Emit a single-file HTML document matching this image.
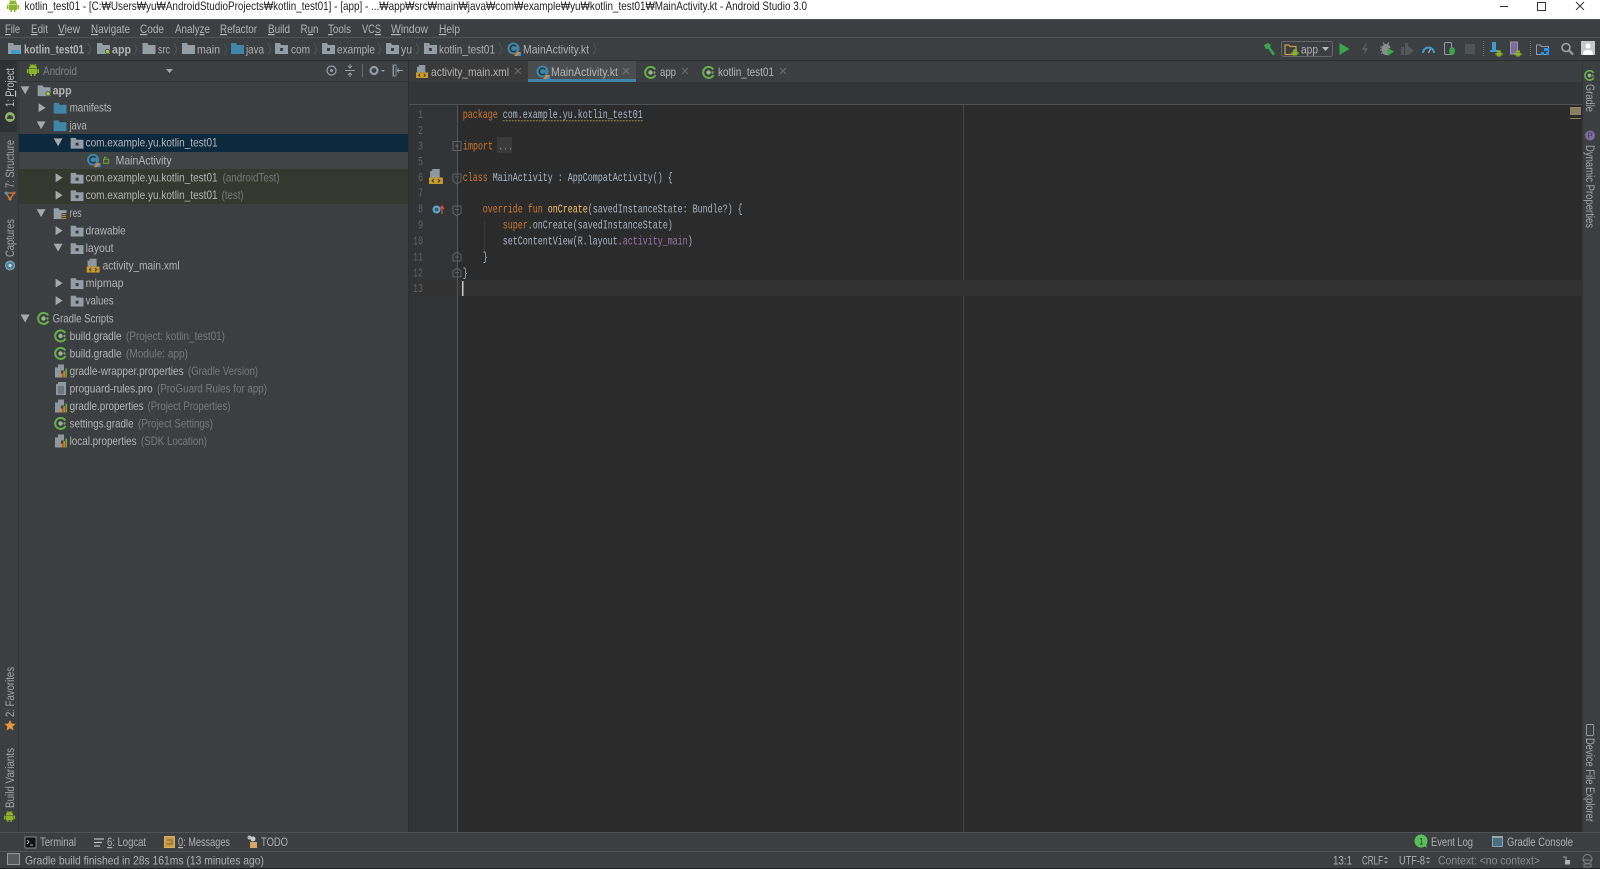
<!DOCTYPE html>
<html lang="en"><head><meta charset="utf-8"><title>kotlin_test01 - Android Studio 3.0</title>
<style>
html,body{margin:0;padding:0;background:#3c3f41;width:1600px;height:869px;overflow:hidden}
svg{display:block;filter:blur(.35px)}
text{font-family:"Liberation Sans","Noto Sans CJK KR",sans-serif;font-size:12px;fill:#b4b4b4;white-space:pre}
.d{fill:#77797b}
.m{fill:#b0b0b0}
.b{font-weight:bold}
.c{font-family:"Liberation Mono","DejaVu Sans Mono",monospace;fill:#a9b7c6}
.n{font-family:"Liberation Mono","DejaVu Sans Mono",monospace;fill:#606366}
.k{fill:#cc7832}.p{fill:#9876aa}.f{fill:#ffc66d}
.u{text-decoration:underline}
.v{font-size:11.5px;fill:#a4a6a8}
.ch{fill:none;stroke:#505355;stroke-width:1}
</style></head>
<body>
<svg xmlns="http://www.w3.org/2000/svg" width="1600" height="869" viewBox="0 0 1600 869">
<defs>
<symbol id="fg" viewBox="0 0 13 11"><path d="M0 0h5l1 2h7v9H0z" fill="#929da5"/></symbol>
<symbol id="fp" viewBox="0 0 13 11"><path d="M0 0h5l1 2h7v9H0z" fill="#929da5"/><rect x="5" y="5" width="3" height="3" fill="#3c3f41"/></symbol>
<symbol id="fb" viewBox="0 0 13 11"><path d="M0 0h5l1 2h7v9H0z" fill="#3f86a8"/></symbol>
<symbol id="fa" viewBox="0 0 13 11"><path d="M0 0h5l1 2h7v9H0z" fill="#929da5"/><circle cx="10.500" cy="8.500" r="2.500" fill="#3c3f41"/><circle cx="10.500" cy="8.500" r="1.800" fill="#a4c639"/></symbol>
<symbol id="fr" viewBox="0 0 13 11"><path d="M0 0h5l1 2h7v9H0z" fill="#929da5"/><path d="M8 5h5v6H8z" fill="#3c3f41"/><path d="M8.500 6h4v1h-4zM8.500 8h4v1h-4zM8.500 10h4v1h-4z" fill="#c9952c"/></symbol>
<symbol id="cl" viewBox="0 0 14 14"><circle cx="6.500" cy="6.500" r="6" fill="#3f86a8"/><path d="M9 4.500A3.200 3.200 0 1 0 9 8.500" fill="none" stroke="#26343c" stroke-width="1.500"/><path d="M7 14l3.500-4H14L10 14z" fill="#f58220"/><path d="M10 14l4-4v4z" fill="#2196f3"/></symbol>
<symbol id="gr" viewBox="0 0 13 13"><path d="M11.300 3.500A5.500 5.500 0 1 0 11.500 9" fill="none" stroke="#66b04a" stroke-width="2"/><circle cx="6.500" cy="6.500" r="2.200" fill="#9db48f"/><circle cx="10.500" cy="6.500" r="1.200" fill="#66b04a"/></symbol>
<symbol id="xm" viewBox="0 0 14 14"><path d="M3 0h7v8H1V2z" fill="#8e989f"/><path d="M3 0v2H1z" fill="#3c3f41"/><rect x="0" y="8" width="13" height="6" fill="#c79a2d"/><path d="M4.500 9.500L3 11l1.500 1.500M8.500 9.500L10 11l-1.500 1.500" fill="none" stroke="#3c3320" stroke-width="1"/></symbol>
<symbol id="pr" viewBox="0 0 12 13"><path d="M3 0h6v6H6v7H0V3z" fill="#8e989f"/><path d="M3 0v3H0z" fill="#3c3f41"/><rect x="6" y="9" width="1.600" height="4" fill="#e0822a"/><rect x="8.300" y="6.500" width="1.600" height="6.500" fill="#e0822a"/><rect x="10.400" y="4" width="1.600" height="9" fill="#6fa83c"/></symbol>
<symbol id="tx" viewBox="0 0 12 13"><path d="M3 0h8v13H1V2z" fill="#8e989f"/><path d="M3 0v2H1z" fill="#3c3f41"/><path d="M3 5h6M3 7h6M3 9h6M3 11h6" stroke="#3c3f41" stroke-width=".8"/></symbol>
<symbol id="rt" viewBox="0 0 8 9"><path d="M1 0l7 4.500L1 9z" fill="#a6a8aa"/></symbol>
<symbol id="dn" viewBox="0 0 9 8"><path d="M0 0h9L4.500 8z" fill="#a6a8aa"/></symbol>
<symbol id="an" viewBox="0 0 12 12"><path d="M2 4.500a4 4 0 0 1 8 0z" fill="#8ab528"/><rect x="2" y="5" width="8" height="5" fill="#8ab528"/><rect x="0" y="5" width="1.500" height="4" fill="#8ab528"/><rect x="10.500" y="5" width="1.500" height="4" fill="#8ab528"/><rect x="3.500" y="10" width="1.500" height="2" fill="#8ab528"/><rect x="7" y="10" width="1.500" height="2" fill="#8ab528"/><path d="M3 0l1.500 2M9 0L7.500 2" stroke="#8ab528" stroke-width=".7"/></symbol>
</defs>

<!-- base -->
<rect width="1600" height="869" fill="#3c3f41"/>
<!-- title bar -->
<rect width="1600" height="19" fill="#fff"/>
<rect y="19" width="1600" height="1" fill="#505355"/>
<use href="#an" x="7" y="0" width="12" height="12"/>
<text x="24.500" y="10" textLength="782.500" lengthAdjust="spacingAndGlyphs" style="fill:#222">kotlin_test01 - [C:₩Users₩yu₩AndroidStudioProjects₩kotlin_test01] - [app] - ...₩app₩src₩main₩java₩com₩example₩yu₩kotlin_test01₩MainActivity.kt - Android Studio 3.0</text>
<path d="M1500 6.500h8" stroke="#333" stroke-width="1"/>
<rect x="1537.500" y="2.500" width="8" height="8" fill="none" stroke="#333"/>
<path d="M1576 2l8 8M1584 2l-8 8" stroke="#333" stroke-width="1"/>

<!-- menu -->
<g>
<text x="5" y="33" textLength="15" lengthAdjust="spacingAndGlyphs"><tspan class="u">F</tspan>ile</text>
<text x="31" y="33" textLength="17" lengthAdjust="spacingAndGlyphs"><tspan class="u">E</tspan>dit</text>
<text x="58" y="33" textLength="22" lengthAdjust="spacingAndGlyphs"><tspan class="u">V</tspan>iew</text>
<text x="91" y="33" textLength="39" lengthAdjust="spacingAndGlyphs"><tspan class="u">N</tspan>avigate</text>
<text x="140" y="33" textLength="24" lengthAdjust="spacingAndGlyphs"><tspan class="u">C</tspan>ode</text>
<text x="175" y="33" textLength="35" lengthAdjust="spacingAndGlyphs">Analy<tspan class="u">z</tspan>e</text>
<text x="220" y="33" textLength="37" lengthAdjust="spacingAndGlyphs"><tspan class="u">R</tspan>efactor</text>
<text x="268" y="33" textLength="22" lengthAdjust="spacingAndGlyphs"><tspan class="u">B</tspan>uild</text>
<text x="300.500" y="33" textLength="18" lengthAdjust="spacingAndGlyphs">R<tspan class="u">u</tspan>n</text>
<text x="328" y="33" textLength="23" lengthAdjust="spacingAndGlyphs"><tspan class="u">T</tspan>ools</text>
<text x="362" y="33" textLength="19" lengthAdjust="spacingAndGlyphs">VC<tspan class="u">S</tspan></text>
<text x="391" y="33" textLength="37" lengthAdjust="spacingAndGlyphs"><tspan class="u">W</tspan>indow</text>
<text x="439" y="33" textLength="21" lengthAdjust="spacingAndGlyphs"><tspan class="u">H</tspan>elp</text>
</g>
<rect y="37" width="1600" height="1" fill="#505355"/>

<!-- nav bar -->
<use href="#fg" x="8" y="43" width="13" height="11"/><rect x="11" y="50" width="9" height="4" fill="#3f9bd0"/>
<text class="b" x="24" y="53.500" textLength="60" lengthAdjust="spacingAndGlyphs">kotlin_test01</text>
<path class="ch" d="M88 43l3 6-3 6"/>
<use href="#fa" x="97" y="43" width="13" height="11"/>
<text class="b" x="112" y="53.500" textLength="19" lengthAdjust="spacingAndGlyphs">app</text>
<path class="ch" d="M134 43l3 6-3 6"/>
<use href="#fg" x="142.500" y="43" width="13" height="11"/>
<text x="158" y="53.500" textLength="12" lengthAdjust="spacingAndGlyphs" class="m">src</text>
<path class="ch" d="M174 43l3 6-3 6"/>
<use href="#fg" x="182" y="43" width="13" height="11"/>
<text x="197" y="53.500" textLength="23" lengthAdjust="spacingAndGlyphs" class="m">main</text>
<path class="ch" d="M224 43l3 6-3 6"/>
<use href="#fb" x="231" y="43" width="13" height="11"/>
<text x="246" y="53.500" textLength="18" lengthAdjust="spacingAndGlyphs" class="m">java</text>
<path class="ch" d="M268 43l3 6-3 6"/>
<use href="#fp" x="275" y="43" width="13" height="11"/>
<text x="291" y="53.500" textLength="19" lengthAdjust="spacingAndGlyphs" class="m">com</text>
<path class="ch" d="M314 43l3 6-3 6"/>
<use href="#fp" x="322" y="43" width="13" height="11"/>
<text x="337" y="53.500" textLength="38" lengthAdjust="spacingAndGlyphs" class="m">example</text>
<path class="ch" d="M378 43l3 6-3 6"/>
<use href="#fp" x="386" y="43" width="13" height="11"/>
<text x="401" y="53.500" textLength="11" lengthAdjust="spacingAndGlyphs" class="m">yu</text>
<path class="ch" d="M416 43l3 6-3 6"/>
<use href="#fp" x="424" y="43" width="13" height="11"/>
<text x="439" y="53.500" textLength="56" lengthAdjust="spacingAndGlyphs" class="m">kotlin_test01</text>
<path class="ch" d="M499 43l3 6-3 6"/>
<use href="#cl" x="507" y="42" width="14" height="14"/>
<text x="523" y="53.500" textLength="66" lengthAdjust="spacingAndGlyphs" class="m">MainActivity.kt</text>
<path class="ch" d="M593 43l3 6-3 6"/>

<!-- toolbar right -->
<path d="M1264 45l4-2 3 2-1 2 5 7-2 1.500-5-7-2 1z" fill="#3aa64c"/>
<rect x="1281.500" y="41.500" width="51" height="15" rx="2" fill="none" stroke="#646769"/>
<path d="M1285 45h4l1 1.500h6v8h-11z" fill="none" stroke="#c79a4c" stroke-width="1.200"/>
<use href="#an" x="1291" y="49" width="8" height="7"/>
<text x="1301" y="53.500" textLength="17" lengthAdjust="spacingAndGlyphs">app</text>
<path d="M1322 47h7l-3.500 4z" fill="#bbb"/>
<path d="M1339.500 43v12l10-6z" fill="#3aa64c"/>
<path d="M1366 43l-4 7h3l-1 5 4-7h-3l2-5z" fill="#5a5d5f"/>
<path d="M1383 42.500l1.500 2M1389 42.500l-1.500 2M1380 47h2M1380 50h2M1381 53.500l2-1" stroke="#8a8d8f" stroke-width="1.100"/>
<path d="M1386 44a4.500 5.500 0 0 0-4.500 5.500 4.500 5.500 0 0 0 4.500 5.500h2v-11z" fill="#8a8d8f"/><path d="M1388 44.500a4 4 0 0 1 2.500 3.500h-2.500z" fill="#8a8d8f"/><path d="M1387.500 47.500v8.500l6.500-4.200z" fill="#3aa64c"/>
<rect x="1401" y="47" width="3" height="8" fill="#55585a"/><rect x="1405" y="43" width="3" height="12" fill="#55585a"/><path d="M1408 46v9l6-4.500z" fill="#55585a"/>
<path d="M1423 53a5.500 5.500 0 0 1 11 0" fill="none" stroke="#3f9bd0" stroke-width="2"/><path d="M1428.500 53l2-4" stroke="#a6a8aa" stroke-width="1.300"/>
<rect x="1444.500" y="42.500" width="7" height="12" rx="1" fill="none" stroke="#929da5"/><path d="M1452 47a3 4 0 1 0 .1 0z" fill="#3aa64c"/>
<rect x="1465" y="44" width="10" height="10" fill="#505355"/>
<path d="M1483.500 41v15" stroke="#707375" stroke-dasharray="1 1"/>
<rect x="1492" y="42" width="4" height="9" fill="#3f9bd0"/><rect x="1490" y="50" width="8" height="2" fill="#3f9bd0"/><use href="#an" x="1495" y="50" width="8" height="7"/>
<rect x="1510.500" y="42" width="7" height="12" fill="#7d6a9e" stroke="#929da5"/><use href="#an" x="1514" y="50" width="8" height="7"/>
<path d="M1530.500 41v15" stroke="#707375" stroke-dasharray="1 1"/>
<path d="M1536.500 45h4l1 1.500h7v8h-12z" fill="none" stroke="#929da5"/><rect x="1544" y="48" width="5" height="3" fill="#2196f3"/><rect x="1541" y="52" width="3" height="3" fill="#2196f3"/><rect x="1546" y="52" width="3" height="3" fill="#2196f3"/>
<circle cx="1566" cy="47.500" r="4" fill="none" stroke="#a0a3a5" stroke-width="1.600"/><path d="M1569 50.500l4 4" stroke="#a0a3a5" stroke-width="2"/>
<rect x="1581" y="41" width="14" height="14" fill="#c8c8c8"/><circle cx="1588" cy="46" r="2.500" fill="#fff"/><path d="M1583 55c0-4 2-5 5-5s5 1 5 5z" fill="#fff"/>

<rect y="60" width="1600" height="1" fill="#2c2e30"/>

<!-- left tool bar -->
<rect x="0" y="61" width="17" height="71" fill="#2f3234"/>
<rect x="18" y="61" width="1" height="771" fill="#323436"/>
<text class="v" transform="translate(14 107) rotate(-90)" textLength="39" lengthAdjust="spacingAndGlyphs" style="fill:#c4c4c4">1: <tspan class="u">P</tspan>roject</text>
<circle cx="10" cy="117" r="5" fill="#8fb36a"/><path d="M7 118a3 3 0 0 1 6 0v1H7z" fill="#3c3f41"/>
<text class="v" transform="translate(14 188) rotate(-90)" textLength="48" lengthAdjust="spacingAndGlyphs">7: Structure</text>
<path d="M6 193h8M6 193l4 6M14 193l-4 6" stroke="#d0803a" stroke-width="1.300" fill="none"/><circle cx="6" cy="193" r="1.500" fill="#3f9bd0"/><circle cx="14" cy="193" r="1.500" fill="#d0603a"/><circle cx="10" cy="199" r="1.500" fill="#d0803a"/>
<text class="v" transform="translate(14 257) rotate(-90)" textLength="38" lengthAdjust="spacingAndGlyphs">Captures</text>
<circle cx="10" cy="265.500" r="4.500" fill="#3f86a8" stroke="#a0a3a5"/><circle cx="10" cy="265.500" r="1.500" fill="#ddd"/>
<text class="v" transform="translate(14 717) rotate(-90)" textLength="50" lengthAdjust="spacingAndGlyphs">2: Favorites</text>
<path d="M10 720l1.600 3.500 3.900.4-2.900 2.600.8 3.900-3.400-2-3.400 2 .8-3.900-2.900-2.600 3.900-.4z" fill="#e8983a"/>
<text class="v" transform="translate(14 808) rotate(-90)" textLength="60" lengthAdjust="spacingAndGlyphs">Build Variants</text>
<use href="#an" x="4" y="811" width="11" height="11"/>

<!-- project header -->
<use href="#an" x="27" y="64" width="12" height="12"/>
<text x="43" y="75" textLength="34" lengthAdjust="spacingAndGlyphs" style="fill:#7f8284">Android</text>
<path d="M166 69h7l-3.500 4z" fill="#a6a8aa"/>
<circle cx="331.500" cy="70.500" r="4.500" fill="none" stroke="#929da5" stroke-width="1.300"/><circle cx="331.500" cy="70.500" r="1.500" fill="#929da5"/>
<path d="M345 70.500h10M350 64v4M350 73v4M348 66l2 2 2-2M348 75l2-2 2 2" stroke="#929da5" fill="none"/>
<path d="M362.500 64v13" stroke="#6a6d6f"/>
<circle cx="374" cy="70.500" r="3.500" fill="none" stroke="#929da5" stroke-width="2.200"/><path d="M381 70h4l-2 2z" fill="#929da5"/>
<path d="M393.500 65v11M397 70.500h6M397 70.500l2-2M397 70.500l2 2" stroke="#929da5" fill="none"/><rect x="393" y="65" width="3" height="11" fill="none" stroke="#929da5" stroke-width=".8"/>
<rect x="19" y="81" width="390" height="1" fill="#323436"/>

<!-- tree -->
<rect x="19" y="134" width="389" height="18" fill="#0d293e"/>
<rect x="19" y="152" width="389" height="17" fill="#414345"/>
<rect x="19" y="169" width="389" height="35" fill="#33392e"/>

<g transform="translate(-.4 -.8)">
<use href="#dn" x="21" y="87" width="9" height="8"/><use href="#fa" x="38" y="86" width="13" height="11"/>
<text class="b" x="53" y="95.500" textLength="19" lengthAdjust="spacingAndGlyphs">app</text>
<use href="#rt" x="38" y="104" width="8" height="9"/><use href="#fb" x="54" y="103.500" width="13" height="11"/>
<text x="70" y="112.500" textLength="42" lengthAdjust="spacingAndGlyphs">manifests</text>
<use href="#dn" x="37" y="122" width="9" height="8"/><use href="#fb" x="54" y="121" width="13" height="11"/>
<text x="70" y="130.500" textLength="17" lengthAdjust="spacingAndGlyphs">java</text>
<use href="#dn" x="54" y="139" width="9" height="8"/><use href="#fp" x="71" y="138.500" width="13" height="11"/>
<text x="86" y="147.500" textLength="132" lengthAdjust="spacingAndGlyphs">com.example.yu.kotlin_test01</text>
<use href="#cl" x="87" y="154" width="14" height="14"/><path d="M104 160h5v4h-5zM105 160v-2h2" fill="none" stroke="#6fa83c"/>
<text x="116" y="165.500" textLength="56" lengthAdjust="spacingAndGlyphs">MainActivity</text>
<use href="#rt" x="55" y="174" width="8" height="9"/><use href="#fp" x="71" y="173.500" width="13" height="11"/>
<text x="86" y="182.500" textLength="132" lengthAdjust="spacingAndGlyphs">com.example.yu.kotlin_test01</text>
<text class="d" x="223" y="182.500" textLength="57" lengthAdjust="spacingAndGlyphs">(androidTest)</text>
<use href="#rt" x="55" y="191.500" width="8" height="9"/><use href="#fp" x="71" y="191" width="13" height="11"/>
<text x="86" y="200" textLength="132" lengthAdjust="spacingAndGlyphs">com.example.yu.kotlin_test01</text>
<text class="d" x="222" y="200" textLength="22" lengthAdjust="spacingAndGlyphs">(test)</text>
</g>
<g transform="translate(-.4 -.4)">
<use href="#dn" x="37" y="209.500" width="9" height="8"/><use href="#fr" x="54" y="208.500" width="13" height="11"/>
<text x="70" y="217.500" textLength="12" lengthAdjust="spacingAndGlyphs">res</text>
<use href="#rt" x="55" y="226.500" width="8" height="9"/><use href="#fp" x="71" y="226" width="13" height="11"/>
<text x="86" y="235" textLength="40" lengthAdjust="spacingAndGlyphs">drawable</text>
<use href="#dn" x="54" y="244" width="9" height="8"/><use href="#fp" x="71" y="243.500" width="13" height="11"/>
<text x="86" y="252.500" textLength="28" lengthAdjust="spacingAndGlyphs">layout</text>
<use href="#xm" x="87" y="259" width="14" height="14"/>
<text x="103" y="270" textLength="77" lengthAdjust="spacingAndGlyphs">activity_main.xml</text>
<use href="#rt" x="55" y="279" width="8" height="9"/><use href="#fp" x="71" y="278.500" width="13" height="11"/>
<text x="86" y="287.500" textLength="38" lengthAdjust="spacingAndGlyphs">mipmap</text>
<use href="#rt" x="55" y="296.500" width="8" height="9"/><use href="#fp" x="71" y="296" width="13" height="11"/>
<text x="86" y="305" textLength="28" lengthAdjust="spacingAndGlyphs">values</text>
</g>
<use href="#dn" x="20.600" y="314.500" width="9" height="8"/><use href="#gr" x="37" y="312" width="13" height="13"/>
<text x="52.600" y="322.500" textLength="61" lengthAdjust="spacingAndGlyphs">Gradle Scripts</text>
<use href="#gr" x="54" y="329.500" width="13" height="13"/>
<text x="69.600" y="340" textLength="52" lengthAdjust="spacingAndGlyphs">build.gradle</text>
<text class="d" x="126" y="340" textLength="99" lengthAdjust="spacingAndGlyphs">(Project: kotlin_test01)</text>
<use href="#gr" x="54" y="347" width="13" height="13"/>
<text x="69.600" y="357.500" textLength="52" lengthAdjust="spacingAndGlyphs">build.gradle</text>
<text class="d" x="126" y="357.500" textLength="62" lengthAdjust="spacingAndGlyphs">(Module: app)</text>
<use href="#pr" x="55" y="364.500" width="12" height="13"/>
<text x="69.600" y="375" textLength="114" lengthAdjust="spacingAndGlyphs">gradle-wrapper.properties</text>
<text class="d" x="188" y="375" textLength="70" lengthAdjust="spacingAndGlyphs">(Gradle Version)</text>
<use href="#tx" x="55" y="382" width="12" height="13"/>
<text x="69.600" y="392.500" textLength="83" lengthAdjust="spacingAndGlyphs">proguard-rules.pro</text>
<text class="d" x="157" y="392.500" textLength="110" lengthAdjust="spacingAndGlyphs">(ProGuard Rules for app)</text>
<use href="#pr" x="55" y="399.500" width="12" height="13"/>
<text x="69.600" y="410" textLength="74" lengthAdjust="spacingAndGlyphs">gradle.properties</text>
<text class="d" x="147.500" y="410" textLength="83" lengthAdjust="spacingAndGlyphs">(Project Properties)</text>
<use href="#gr" x="54" y="417" width="13" height="13"/>
<text x="69.600" y="427.500" textLength="64" lengthAdjust="spacingAndGlyphs">settings.gradle</text>
<text class="d" x="138" y="427.500" textLength="75" lengthAdjust="spacingAndGlyphs">(Project Settings)</text>
<use href="#pr" x="55" y="434.500" width="12" height="13"/>
<text x="69.600" y="445" textLength="67" lengthAdjust="spacingAndGlyphs">local.properties</text>
<text class="d" x="141" y="445" textLength="66" lengthAdjust="spacingAndGlyphs">(SDK Location)</text>

<!-- splitter -->
<rect x="408" y="61" width="1" height="771" fill="#2c2e30"/>

<!-- tabs -->
<rect x="409" y="61" width="1173" height="21" fill="#3c3f41"/>
<rect x="409" y="61" width="119" height="21" fill="#3a3a3a"/>
<rect x="528" y="61" width="108" height="18" fill="#4a4d4f"/>
<rect x="528" y="79" width="108" height="3" fill="#4083a9"/>
<use href="#xm" x="416" y="65" width="13" height="13"/>
<text x="431" y="76" textLength="78" lengthAdjust="spacingAndGlyphs">activity_main.xml</text>
<path d="M515 68l6 6M521 68l-6 6" stroke="#6b6e70"/>
<use href="#cl" x="536" y="65" width="14" height="14"/>
<text x="551" y="76" textLength="67" lengthAdjust="spacingAndGlyphs">MainActivity.kt</text>
<path d="M623 68l6 6M629 68l-6 6" stroke="#75787a"/>
<use href="#gr" x="644" y="66" width="13" height="13"/>
<text x="660" y="76" textLength="16" lengthAdjust="spacingAndGlyphs">app</text>
<path d="M682 68l6 6M688 68l-6 6" stroke="#6b6e70"/>
<use href="#gr" x="702" y="66" width="13" height="13"/>
<text x="718" y="76" textLength="56" lengthAdjust="spacingAndGlyphs">kotlin_test01</text>
<path d="M780 68l6 6M786 68l-6 6" stroke="#6b6e70"/>

<!-- breadcrumb band -->
<rect x="409" y="82" width="1173" height="22" fill="#333537"/>
<rect x="409" y="104" width="1173" height="1" fill="#505355"/>

<!-- editor -->
<rect x="409" y="105" width="1173" height="727" fill="#2b2b2b"/>
<rect x="409" y="105" width="48" height="727" fill="#313335"/>
<rect x="457" y="105" width="1" height="727" fill="#555555"/>
<rect x="963" y="105" width="1" height="727" fill="#444444"/>
<rect x="458" y="280" width="1124" height="16" fill="#323232"/>
<rect x="409" y="280" width="48" height="16" fill="#323232"/>
<rect x="484" y="221" width="1" height="32" fill="#3b3b3b"/>
<rect x="1570" y="107" width="11" height="8" fill="#8a7f63"/>
<rect x="1570" y="118" width="11" height="1" fill="#8a7f63"/>

<!-- line numbers -->
<g text-anchor="end">
<text class="n" x="423" y="118" textLength="5" lengthAdjust="spacingAndGlyphs">1</text>
<text class="n" x="423" y="134" textLength="5" lengthAdjust="spacingAndGlyphs">2</text>
<text class="n" x="423" y="149.500" textLength="5" lengthAdjust="spacingAndGlyphs">3</text>
<text class="n" x="423" y="165" textLength="5" lengthAdjust="spacingAndGlyphs">5</text>
<text class="n" x="423" y="181" textLength="5" lengthAdjust="spacingAndGlyphs">6</text>
<text class="n" x="423" y="196.500" textLength="5" lengthAdjust="spacingAndGlyphs">7</text>
<text class="n" x="423" y="212.500" textLength="5" lengthAdjust="spacingAndGlyphs">8</text>
<text class="n" x="423" y="228.500" textLength="5" lengthAdjust="spacingAndGlyphs">9</text>
<text class="n" x="423" y="244.500" textLength="10" lengthAdjust="spacingAndGlyphs">10</text>
<text class="n" x="423" y="260.500" textLength="10" lengthAdjust="spacingAndGlyphs">11</text>
<text class="n" x="423" y="276.500" textLength="10" lengthAdjust="spacingAndGlyphs">12</text>
<text class="n" x="423" y="292" textLength="10" lengthAdjust="spacingAndGlyphs">13</text>
</g>

<!-- gutter icons & folding -->
<use href="#xm" x="429" y="168" width="15" height="17"/>
<circle cx="436.500" cy="209.500" r="4" fill="#5aa5c8"/><circle cx="436.500" cy="209.500" r="1.700" fill="#2f5a70"/>
<path d="M442 214v-7M440 209l2-3 2 3" stroke="#d0503c" fill="none" stroke-width="1.300"/>
<g fill="none" stroke="#5f6264">
<rect x="453" y="141.500" width="8" height="9"/><path d="M455 146h4M457 144v4" />
<path d="M453 174h8v7l-4 3-4-3z"/><path d="M455 177h4"/>
<path d="M453 206h8v7l-4 3-4-3z"/><path d="M455 209.500h4"/>
<path d="M453 261h8v-6l-4-3-4 3z"/><path d="M455 257h4"/>
<path d="M453 277h8v-6l-4-3-4 3z"/><path d="M455 272.500h4"/>
</g>

<!-- code -->
<text class="c" x="462.700" y="118" textLength="180" lengthAdjust="spacingAndGlyphs"><tspan class="k">package</tspan> com.example.yu.kotlin_test01</text>
<path d="M502.700 120.800H643" stroke="#8f8b4f" stroke-width="1" stroke-dasharray="2 1"/>
<text class="c k" x="463" y="149.500" textLength="30" lengthAdjust="spacingAndGlyphs" style="fill:#cc7832">import</text>
<rect x="497" y="137" width="15" height="16" fill="#3a3a3a"/>
<text class="c" x="498" y="149.500" textLength="15" lengthAdjust="spacingAndGlyphs" style="fill:#808080">...</text>
<text class="c" x="462.700" y="181" textLength="210" lengthAdjust="spacingAndGlyphs"><tspan class="k">class</tspan> MainActivity : AppCompatActivity() {</text>
<text class="c" x="482.700" y="212.500" textLength="260" lengthAdjust="spacingAndGlyphs"><tspan class="k">override fun</tspan> <tspan class="f">onCreate</tspan>(savedInstanceState: Bundle?) {</text>
<text class="c" x="502.700" y="228.500" textLength="170" lengthAdjust="spacingAndGlyphs"><tspan class="k">super</tspan>.onCreate(savedInstanceState)</text>
<text class="c" x="502.700" y="244.500" textLength="190" lengthAdjust="spacingAndGlyphs">setContentView(R.layout.<tspan class="p">activity_main</tspan>)</text>
<text class="c" x="482.700" y="260.500" textLength="5" lengthAdjust="spacingAndGlyphs">}</text>
<text class="c" x="462.700" y="276.500" textLength="5" lengthAdjust="spacingAndGlyphs">}</text>
<rect x="462" y="281" width="1.500" height="15" fill="#c8c8c8"/>

<!-- right tool bar -->
<rect x="1582" y="61" width="1" height="771" fill="#323436"/>
<use href="#gr" x="1584" y="70" width="11" height="11"/>
<text class="v" transform="translate(1586 84) rotate(90)" textLength="28" lengthAdjust="spacingAndGlyphs">Gradle</text>
<circle cx="1590" cy="135.500" r="5" fill="#7d6a9e"/><text x="1587.500" y="138.500" textLength="5" lengthAdjust="spacingAndGlyphs" style="font-size:8px;fill:#3c3f41">P</text>
<text class="v" transform="translate(1586 145) rotate(90)" textLength="83" lengthAdjust="spacingAndGlyphs">Dynamic Properties</text>
<rect x="1586.500" y="724.500" width="7" height="11" rx="1" fill="none" stroke="#8e989f"/>
<text class="v" transform="translate(1586 738) rotate(90)" textLength="84" lengthAdjust="spacingAndGlyphs">Device File Explorer</text>

<!-- bottom tool bar -->
<rect y="832" width="1600" height="1" fill="#505355"/>
<rect x="25" y="837" width="11" height="11" fill="#111" stroke="#9a9d9f" stroke-width=".8"/><path d="M27 840l2 2-2 2M30 845h3" stroke="#ddd" fill="none" stroke-width=".8"/>
<text class="m" x="40" y="846" textLength="36" lengthAdjust="spacingAndGlyphs">Terminal</text>
<path d="M94 839h10M94 842.500h8M94 846h6" stroke="#bbb" stroke-width="1.300"/>
<text class="m" x="107" y="846" textLength="39" lengthAdjust="spacingAndGlyphs"><tspan class="u">6</tspan>: Logcat</text>
<rect x="164.500" y="836.500" width="10" height="11" fill="#c79a4c" stroke="#d8ae60"/><path d="M167 840h5v4h-5" fill="none" stroke="#8a6a2c"/>
<text class="m" x="178" y="846" textLength="52" lengthAdjust="spacingAndGlyphs"><tspan class="u">0</tspan>: Messages</text>
<rect x="250" y="842" width="7" height="6" fill="#d8a468"/><circle cx="253" cy="839" r="2.500" fill="#ccc"/><circle cx="249.500" cy="837.500" r="2" fill="#bbb"/>
<text class="m" x="261" y="846" textLength="27" lengthAdjust="spacingAndGlyphs">TODO</text>
<circle cx="1421" cy="841" r="6.500" fill="#5abf5a"/><path d="M1424 846l3 2-1-4z" fill="#5abf5a"/><text x="1419" y="844.500" textLength="4.500" lengthAdjust="spacingAndGlyphs" style="font-size:9px;fill:#23401f">1</text>
<text class="m" x="1431" y="846" textLength="42" lengthAdjust="spacingAndGlyphs">Event Log</text>
<rect x="1492.500" y="836.500" width="10" height="10" fill="#4a6e85" stroke="#8aa4b5"/><rect x="1492" y="836" width="11" height="2" fill="#9aa7b0"/>
<text class="m" x="1507" y="846" textLength="66" lengthAdjust="spacingAndGlyphs">Gradle Console</text>

<!-- status bar -->
<rect y="851" width="1600" height="1" fill="#505355"/>
<rect x="7.500" y="853.500" width="12" height="11" fill="#57595b" stroke="#8e989f"/>
<text class="m" x="25" y="864.300" textLength="239" lengthAdjust="spacingAndGlyphs">Gradle build finished in 28s 161ms (13 minutes ago)</text>
<text class="m" x="1333" y="864.300" textLength="19" lengthAdjust="spacingAndGlyphs">13:1</text>
<text class="m" x="1362" y="864.300" textLength="21" lengthAdjust="spacingAndGlyphs">CRLF</text>
<path d="M1384 859l2-2 2 2zM1384 861.500l2 2 2-2z" fill="#a6a8aa"/>
<text class="m" x="1399" y="864.300" textLength="26" lengthAdjust="spacingAndGlyphs">UTF-8</text>
<path d="M1426 859l2-2 2 2zM1426 861.500l2 2 2-2z" fill="#a6a8aa"/>
<text class="d" x="1438" y="864.300" textLength="102" lengthAdjust="spacingAndGlyphs" style="fill:#8a8c8e">Context: &lt;no context&gt;</text>
<path d="M1563 857h3v3" fill="none" stroke="#a0a3a5"/><rect x="1565" y="860" width="5" height="4.500" fill="#b4b4b4"/>
<circle cx="1587.500" cy="859" r="4.500" fill="none" stroke="#7f8284"/><path d="M1583 860h9M1584 864h7v3h-7z" fill="none" stroke="#7f8284"/>
<rect y="868" width="1600" height="1" fill="#1f2122"/>
</svg>
</body></html>
